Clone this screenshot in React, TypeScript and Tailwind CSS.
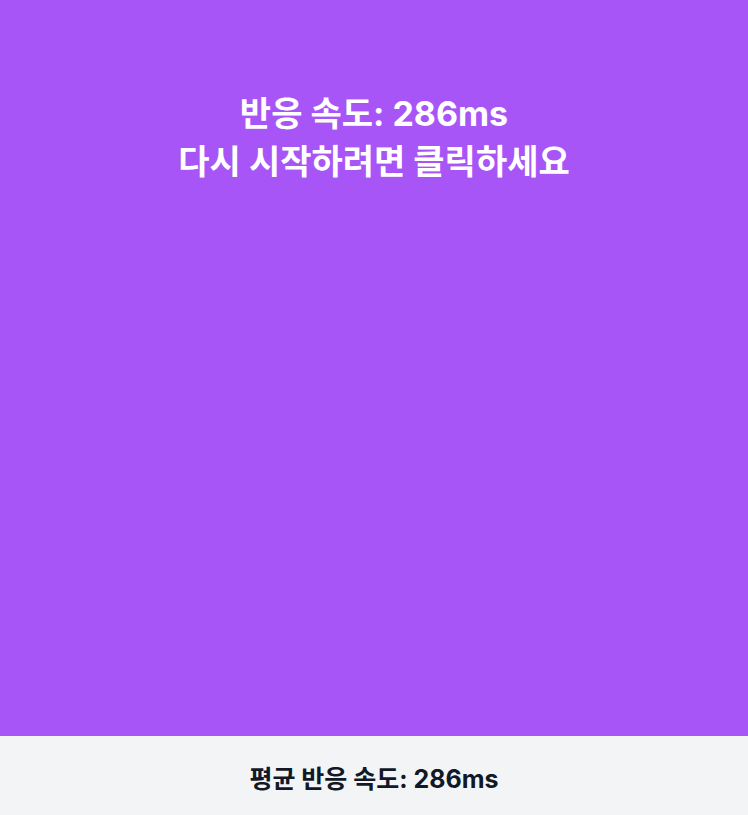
import React from 'react';

const App: React.FC = () => {
  return (
    <div
      className="h-screen flex flex-col"
      style={{ fontFamily: 'Inter, "Noto Sans CJK KR", sans-serif' }}
    >
      {/* Reaction area */}
      <div className="flex-1 bg-[#a855f7] cursor-pointer flex justify-center pt-[90px]">
        <div className="text-white text-[34px] leading-[48px] font-bold text-center">
          <p>반응 속도: 286ms</p>
          <p>다시 시작하려면 클릭하세요</p>
        </div>
      </div>

      {/* Average */}
      <div className="h-[79px] bg-[#f3f4f6] flex items-center justify-center pt-2">
        <p className="text-[25px] font-bold text-[#111827]">평균 반응 속도: 286ms</p>
      </div>
    </div>
  );
};

export default App;
